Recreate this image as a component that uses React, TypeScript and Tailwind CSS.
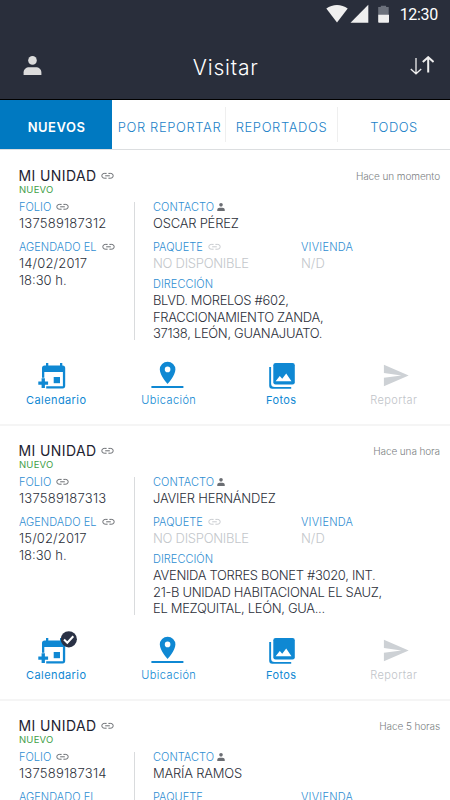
import React from "react";

type Visit = {
  folio: string;
  date: string;
  contact: string;
  ago: string;
  address: string[];
  scheduled?: boolean;
};

const visits: Visit[] = [
  {
    folio: "137589187312",
    date: "14/02/2017",
    contact: "OSCAR PÉREZ",
    ago: "Hace un momento",
    address: ["BLVD. MORELOS #602,", "FRACCIONAMIENTO ZANDA,", "37138, LEÓN, GUANAJUATO."],
  },
  {
    folio: "137589187313",
    date: "15/02/2017",
    contact: "JAVIER HERNÁNDEZ",
    ago: "Hace una hora",
    address: ["AVENIDA TORRES BONET #3020, INT.", "21-B UNIDAD HABITACIONAL EL SAUZ,", "EL MEZQUITAL, LEÓN, GUA..."],
    scheduled: true,
  },
];

const partialVisit = { folio: "137589187314", contact: "MARÍA RAMOS", ago: "Hace 5 horas" };

function LinkIcon({ faded = false }: { faded?: boolean }) {
  return (
    <svg className={"shrink-0 " + (faded ? "text-[#c8cbcf]" : "text-[#6b6e73]")} width="13" height="8" viewBox="0 0 13 8" fill="none" stroke="currentColor">
      <path d="M5.600 1.400H3.200a2.400 2.400 0 0 0 0 4.800h2.400M7.400 1.400h2.400a2.400 2.400 0 0 1 0 4.800H7.400M4.200 3.800h4.600" />
    </svg>
  );
}

function PersonIcon({ size, className }: { size: number; className: string }) {
  return (
    <svg className={className} width={size} height={size} viewBox="0 0 19 19" fill="currentColor">
      <circle cx="9.500" cy="4.400" r="4.300" />
      <path d="M.6 19v-2.400c0-3.500 2.500-5.400 5.700-5.400h6.400c3.200 0 5.700 1.900 5.700 5.400V19z" />
    </svg>
  );
}

function CalendarIcon({ checked = false }: { checked?: boolean }) {
  return (
    <svg className="overflow-visible" width="36" height="30" viewBox="0 0 36 30" fill="#0f88d3">
      <path d="M4 8a2.600 2.600 0 0 1 2.600-2.600H8V3h2.300v2.400H22V3h2.300v2.400h.3A2.600 2.600 0 0 1 27.200 8v17.800a2.600 2.600 0 0 1-2.600 2.600H8.200v-2.200H24.900V12H6.300v5.800H4z" />
      <path d="M3.600 18.200h3.300v3.300h3.200v3.200H6.900V28H3.600v-3.300H.3v-3.200h3.300z" />
      <path d="M15.700 17H22v6.200h-6.300z" />
      {checked && (
        <>
          <circle cx="30.800" cy="4.300" r="8.100" fill="#2a3145" />
          <path d="m26 4.500 3.300 3.300 6-6.500" fill="none" stroke="#fff" strokeWidth="2" />
        </>
      )}
    </svg>
  );
}

function PinIcon() {
  return (
    <svg width="36" height="30" viewBox="0 0 36 30" fill="#0f88d3">
      <path fillRule="evenodd" d="M16.600 1.700a7.800 7.800 0 0 0-7.800 7.800c0 5.800 7.800 14.500 7.800 14.500s7.800-8.700 7.800-14.500a7.800 7.800 0 0 0-7.800-7.800zm0 10.500a2.800 2.800 0 1 1 0-5.600 2.800 2.800 0 0 1 0 5.600z" />
      <path d="M.4 25.900h32v2.200H.4z" />
    </svg>
  );
}

function PhotosIcon() {
  return (
    <svg width="36" height="30" viewBox="0 0 36 30" fill="#0f88d3">
      <rect x="10.300" y="3" width="21.500" height="21.600" rx="2.300" />
      <path d="M6.200 7h1.900v16.500a3.600 3.600 0 0 0 3.600 3.600h16.500v1.600H9.200a3 3 0 0 1-3-3z" />
      <path d="m12.600 21.300 4.200-5.200 2.400 2.700 4-5.200 5.300 7.700z" fill="#fff" />
    </svg>
  );
}

function SendIcon() {
  return (
    <svg width="36" height="30" viewBox="0 0 36 30" fill="#cdd1d5">
      <path d="M7.900 4.700 32.700 15.400 7.900 26.200v-8.400l17.500-2.400-17.500-2.300z" />
    </svg>
  );
}

function Label({ children, icon }: { children: React.ReactNode; icon?: React.ReactNode }) {
  return (
    <div className="flex h-4 items-center gap-[5px] text-[11px] leading-4 tracking-[0.02px] whitespace-nowrap text-[#2f8ed2]">
      {children}
      {icon}
    </div>
  );
}

function Action({ label, icon, className }: { label: string; icon: React.ReactNode; className: string }) {
  return (
    <div className="flex flex-col items-center">
      {icon}
      <span className={"mt-[3px] text-[11px] leading-[14px] tracking-[0.4px] " + className}>{label}</span>
    </div>
  );
}

function CardHeader({ ago }: { ago: string }) {
  return (
    <>
      <div className="flex h-[18px] items-center justify-between pr-[10px] pl-[18.500px]">
        <h2 className="flex items-center gap-1 text-[14px] leading-[18px] font-normal tracking-[0.4px] text-[#1d2230]">
          MI UNIDAD
          <LinkIcon />
        </h2>
        <span className="text-[10px] leading-4 font-light tracking-[-0.1px] text-[#7c7f83]">{ago}</span>
      </div>
      <div className="pl-[19px] text-[9.500px] leading-[10px] font-normal tracking-[0.2px] text-[#43a047]">NUEVO</div>
    </>
  );
}

const value = "text-[13px] leading-[17px] whitespace-nowrap ";

function Card({ v }: { v: Visit }) {
  return (
    <article className="flex h-[275px] shrink-0 flex-col border-b-2 border-[#f5f5f5] pt-4">
      <CardHeader ago={v.ago} />
      <div className="mt-[4px] flex h-[141px] font-light text-[#2c303a]">
        <div className="w-[134px] shrink-0 pl-[19px]">
          <Label icon={<LinkIcon />}>FOLIO</Label>
          <div className={value + "tracking-[0.23px]"}>{v.folio}</div>
          <div className="mt-[7px]">
            <Label icon={<LinkIcon />}>AGENDADO EL</Label>
          </div>
          <div className={value + "tracking-[0.15px]"}>{v.date}</div>
          <div className={value}>18:30 h.</div>
        </div>
        <div className="mt-[3px] h-[138px] w-px bg-[#d9dbdd]" />
        <div className="pl-[18px]">
          <Label icon={<PersonIcon size={8} className="-ml-0.5 mb-px text-[#6b6e73]" />}>CONTACTO</Label>
          <div className={value + "tracking-[-0.22px]"}>{v.contact}</div>
          <div className="mt-[7px] flex">
            <div className="w-[148px]">
              <Label icon={<LinkIcon faded />}>PAQUETE</Label>
              <div className={value + "tracking-[-0.27px] text-[#c3c7cb]"}>NO DISPONIBLE</div>
            </div>
            <div>
              <Label><span className="tracking-[0.2px]">VIVIENDA</span></Label>
              <div className={value + "text-[#c3c7cb]"}>N/D</div>
            </div>
          </div>
          <div className="mt-[4px]">
            <Label>DIRECCIÓN</Label>
          </div>
          {v.address.map((line) => (
            <div key={line} className="text-[13px] leading-[16.700px] tracking-[-0.32px] whitespace-nowrap">{line}</div>
          ))}
        </div>
      </div>
      <div className="mt-[20px] grid grid-cols-4">
        <Action label="Calendario" icon={<CalendarIcon checked={v.scheduled} />} className="text-[#0f88d3]" />
        <Action label="Ubicación" icon={<PinIcon />} className="font-light text-[#0f88d3]" />
        <Action label="Fotos" icon={<PhotosIcon />} className="text-[#0f88d3]" />
        <Action label="Reportar" icon={<SendIcon />} className="font-light text-[#bfc4c9]" />
      </div>
    </article>
  );
}

/* The last card runs past the fold: only its first rows are in view. */
function PartialCard() {
  return (
    <article className="flex h-[99px] shrink-0 flex-col overflow-hidden pt-4">
      <CardHeader ago={partialVisit.ago} />
      <div className="mt-[4px] flex font-light text-[#2c303a]">
        <div className="w-[134px] shrink-0 pl-[19px]">
          <Label icon={<LinkIcon />}>FOLIO</Label>
          <div className={value + "tracking-[0.23px]"}>{partialVisit.folio}</div>
          <div className="mt-[7px]">
            <Label>AGENDADO EL</Label>
          </div>
        </div>
        <div className="mt-[3px] w-px bg-[#d9dbdd]" />
        <div className="pl-[18px]">
          <Label icon={<PersonIcon size={8} className="-ml-0.5 mb-px text-[#6b6e73]" />}>CONTACTO</Label>
          <div className={value + "tracking-[-0.22px]"}>{partialVisit.contact}</div>
          <div className="mt-[7px] flex">
            <div className="w-[148px]">
              <Label>PAQUETE</Label>
            </div>
            <Label><span className="tracking-[0.2px]">VIVIENDA</span></Label>
          </div>
        </div>
      </div>
    </article>
  );
}

export default function App() {
  return (
    <div className="flex h-[800px] w-[450px] flex-col overflow-hidden bg-white font-['Inter',sans-serif]">
      <header className="h-[100px] shrink-0 border-b border-black bg-[#292e3b] text-white">
        <div className="flex h-[28px] items-center justify-end pr-[12px]">
          <svg width="64" height="20" viewBox="0 0 64 20" fill="#efefef">
            <path d="M.3 4.500C6.500-.2 15.500-.2 21.700 4.500L11 18.500z" />
            <path d="M42.300 0.800v18H24.500z" />
            <path d="M52.200 3.100h2.600V1.700h5.300v1.400h2.600v7.800H52.200z" fill="#6c717c" />
            <path d="M52.200 10.700h10.800v7.300a.8.8 0 0 1-.8.8h-9.200a.8.8 0 0 1-.8-.8z" />
          </svg>
          <span className="ml-[10px] pt-px font-['Roboto',sans-serif] text-[16px] leading-5 tracking-[-0.3px]">12:30</span>
        </div>
        <div className="grid h-[71px] grid-cols-[1fr_auto_1fr] items-center pt-[5px] pr-4 pl-[22.500px]">
          <PersonIcon size={19} className="-mt-0.5 text-[#dcdcdc]" />
          <h1 className="mt-1 ml-[-5px] text-[21px] leading-7 font-light tracking-[0.8px]">Visitar</h1>
          <svg className="-mt-0.5 justify-self-end" width="24" height="19" viewBox="0 0 24 19" fill="none" stroke="#efefef">
            <path d="M6 2v15.500M.8 13 6 17.800 11.200 13" strokeWidth="1.300" />
            <path d="M18.200 16.500V1.500M12.800 6l5.400-4.800L23.600 6" strokeWidth="2" />
          </svg>
        </div>
      </header>
      <nav className="mb-px grid h-[50px] shrink-0 grid-cols-[112px_113px_113px_112px] border-b border-[#dcdee0] text-[13px] text-[#1c82c8]">
        <div className="flex items-center justify-center bg-[#0079c1] pt-[7px] pl-px font-semibold tracking-[0.5px] text-white">NUEVOS</div>
        <div className="flex items-center justify-center pt-[7px] pl-0.5 font-light tracking-[0.6px] whitespace-nowrap">POR REPORTAR</div>
        <div className="my-[7px] flex items-center justify-center border-x border-[#efefef] pt-[7px] font-light tracking-[0.6px]">REPORTADOS</div>
        <div className="flex items-center justify-center pt-[7px] font-light tracking-[0.5px]">TODOS</div>
      </nav>
      <main className="flex min-h-0 flex-col overflow-hidden">
        {visits.map((v) => (
          <Card key={v.folio} v={v} />
        ))}
        <PartialCard />
      </main>
    </div>
  );
}
